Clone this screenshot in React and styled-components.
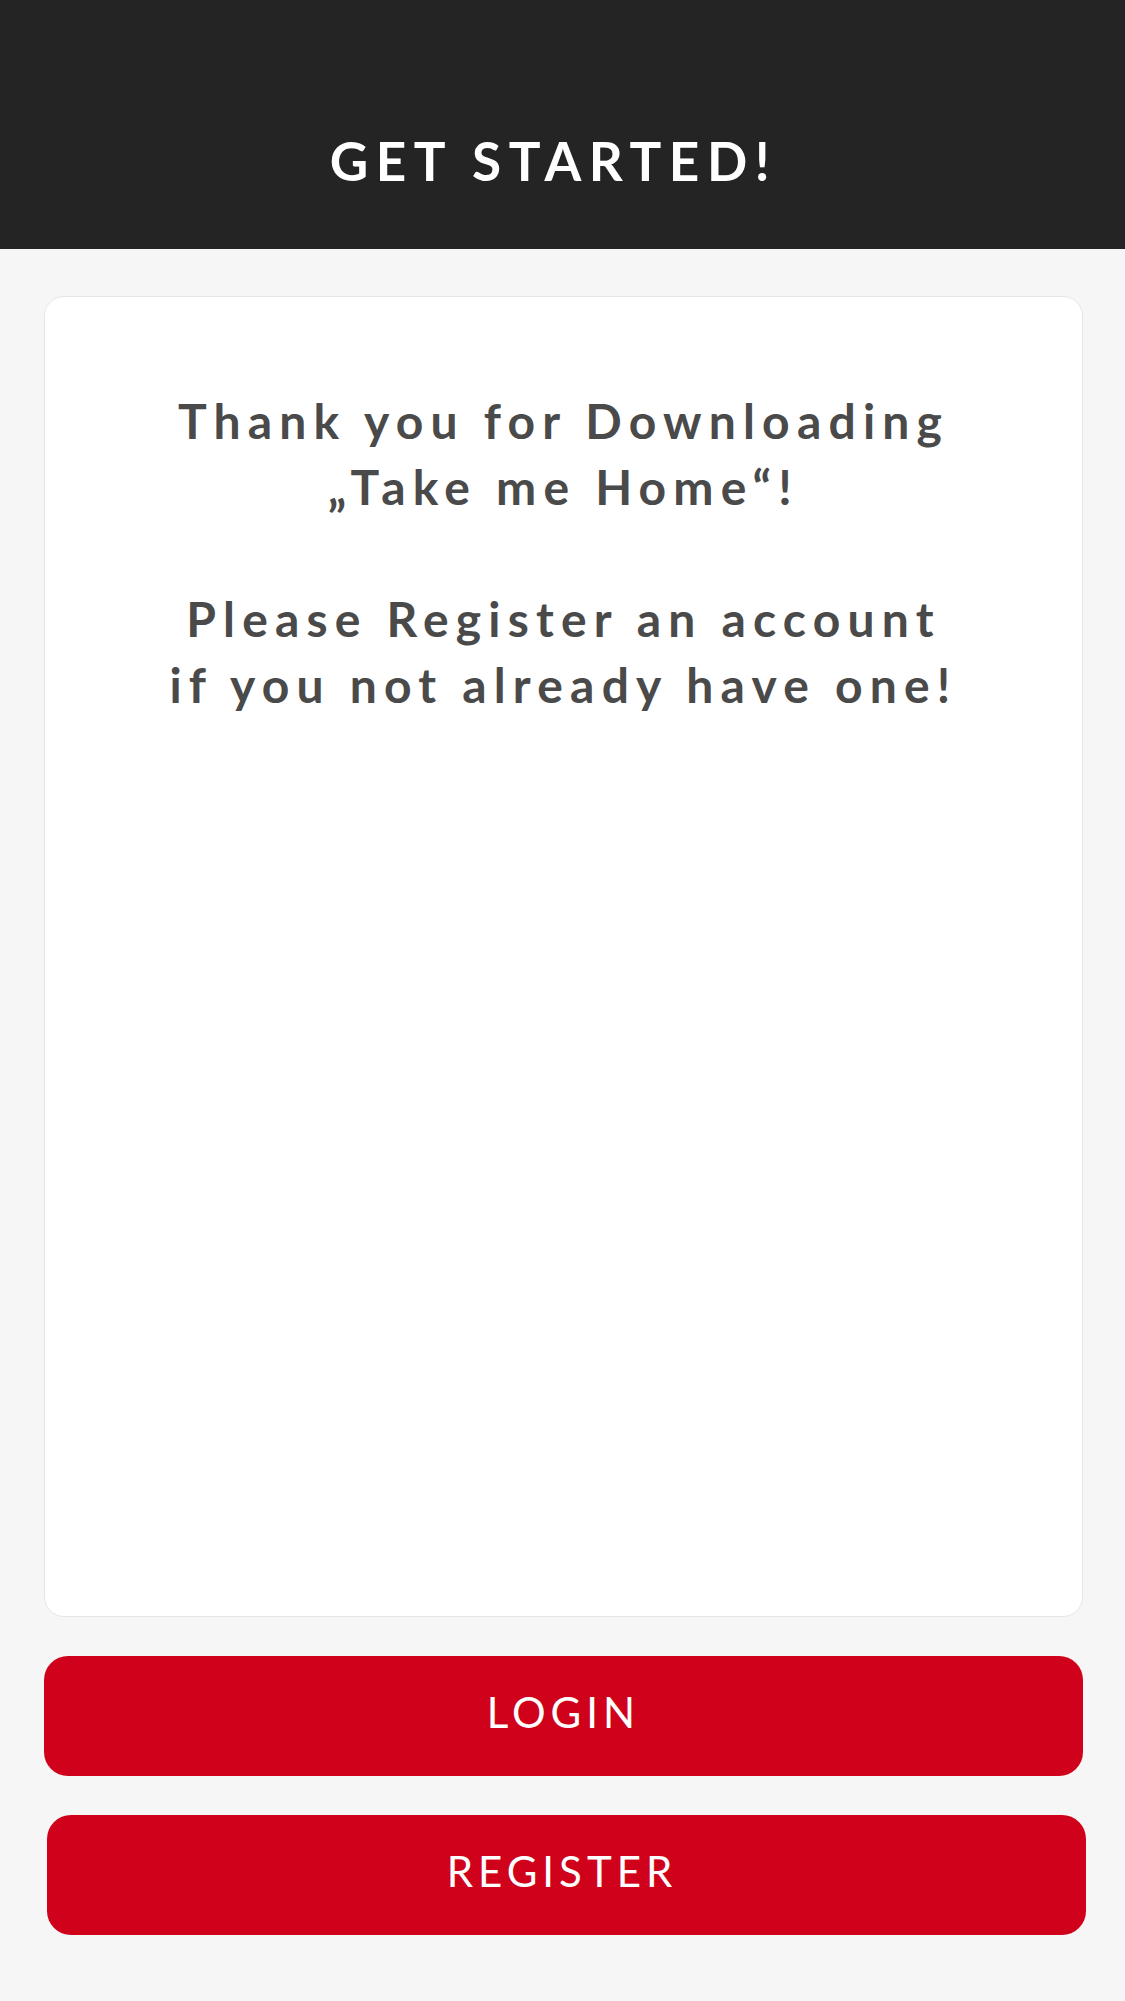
import React from "react";
import styled, { createGlobalStyle } from "styled-components";

const Global = createGlobalStyle`
  html, body { margin: 0; padding: 0; }
  body {
    background: #f6f6f6;
    font-family: Lato, "Open Sans", "Liberation Sans", sans-serif;
  }
  * { box-sizing: border-box; }
`;

const Page = styled.div`
  min-height: 2001px;
  display: flex;
  flex-direction: column;
  background: #f6f6f6;
`;

const Header = styled.header`
  height: 249px;
  background: #242424;
  display: flex;
  align-items: flex-end;
  justify-content: center;
  padding-bottom: 62px;
`;

const Title = styled.h1`
  margin: 0 18px 0 0;
  color: #ffffff;
  font-size: 53px;
  font-weight: 700;
  letter-spacing: 7.6px;
  line-height: 1;
  text-transform: uppercase;
`;

const Main = styled.main`
  flex: 1;
  display: flex;
  flex-direction: column;
  padding: 47px 42px 66px 44px;
`;

const Card = styled.section`
  height: 1321px;
  background: #ffffff;
  border: 1px solid #e6e6e6;
  border-radius: 20px;
  padding: 91px 20px 0;
  display: flex;
  flex-direction: column;
  align-items: center;
`;

const Message = styled.p`
  margin: 0;
  color: #4a4a4a;
  font-size: 48px;
  font-weight: 700;
  letter-spacing: 7.2px;
  line-height: 66px;
  text-align: center;
`;

const Button = styled.button`
  height: 120px;
  margin-top: ${(p) => p.$top}px;
  margin-left: ${(p) => p.$shift}px;
  margin-right: ${(p) => -p.$shift}px;
  padding: 0 ${(p) => p.$shift * 3}px 8px 0;
  background: #d0021b;
  color: #ffffff;
  border: none;
  border-radius: 24px;
  font-family: Lato, "Open Sans", "Liberation Sans", sans-serif;
  font-size: 42px;
  font-weight: 400;
  letter-spacing: 5px;
  text-transform: uppercase;
  display: flex;
  align-items: center;
  justify-content: center;
  cursor: pointer;
`;

export default function App() {
  return (
    <Page>
      <Global />
      <Header>
        <Title>Get Started!</Title>
      </Header>
      <Main>
        <Card>
          <Message>
            Thank you for Downloading
            <br />
            „Take me Home“!
            <br />
            <br />
            Please Register an account
            <br />
            if you not already have one!
          </Message>
        </Card>
        <Button $top={39} $shift={0}>Login</Button>
        <Button $top={39} $shift={3}>Register</Button>
      </Main>
    </Page>
  );
}
